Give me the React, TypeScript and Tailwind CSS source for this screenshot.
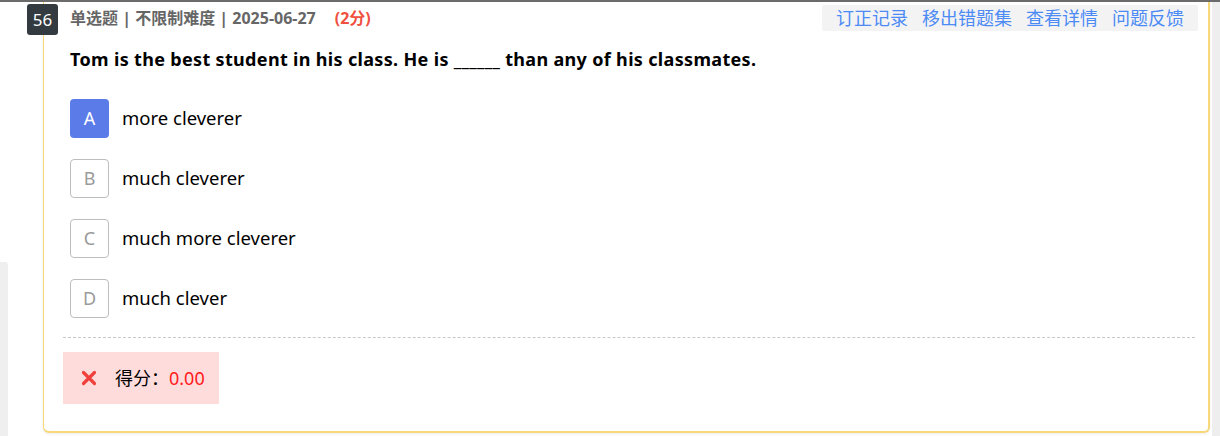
import React from "react";

const font = '"Noto Sans", "Noto Sans CJK SC", sans-serif';

function Option({ letter, text, active }: { letter: string; text: string; active?: boolean }) {
  return (
    <div className="flex items-center h-[38px]">
      {active ? (
        <div className="w-[39px] h-[39px] rounded-[4px] bg-[#5b7be9] text-white flex items-center justify-center text-[18px]">
          {letter}
        </div>
      ) : (
        <div className="w-[39px] h-[39px] rounded-[4px] border border-[#bdbdbd] text-[#9a9a9a] flex items-center justify-center text-[18px]">
          {letter}
        </div>
      )}
      <span className="ml-[13px] text-[18.5px] text-black">{text}</span>
    </div>
  );
}

export default function App() {
  return (
    <div className="relative w-[1220px] h-[436px] bg-white overflow-hidden flex" style={{ fontFamily: font }}>
      <div className="absolute left-0 top-0 w-full h-[2px] bg-[#6b6b6b] z-10" />
      <div className="w-[8px] flex flex-col">
        <div className="h-[262px] bg-white" />
        <div className="flex-1 bg-[#efefef] rounded-tr-[3px]" />
      </div>
      <div className="w-[35px]" />
      <div className="relative w-[1167px] h-[433px] bg-white border-l border-r-2 border-b-2 border-[#f8d878] rounded-b-[6px] shadow-[0_1px_3px_rgba(0,0,0,0.08)] flex flex-col">
        <div className="flex items-center justify-between h-[26px] mt-[5px] pl-[26px] pr-[10px]">
          <div className="flex items-center text-[16px] font-bold text-[#666]">
            <span>单选题 | 不限制难度 | 2025-06-27</span>
            <span className="ml-[19px] text-[#f0503f]">(2分)</span>
          </div>
          <div className="flex items-center h-[26px] bg-[#f3f3f3] rounded-[2px] px-[14px] gap-[14px] text-[18px] text-[#4c8bf5]">
            <span>订正记录</span>
            <span>移出错题集</span>
            <span>查看详情</span>
            <span>问题反馈</span>
          </div>
        </div>
        <div className="pl-[26px] mt-[16px] text-[18px] tracking-[0.33px] font-bold text-black leading-[24px]">
          Tom is the best student in his class. He is ______ than any of his classmates.
        </div>
        <div className="pl-[26px] mt-[28px] flex flex-col gap-[22px]">
          <Option letter="A" text="more cleverer" active />
          <Option letter="B" text="much cleverer" />
          <Option letter="C" text="much more cleverer" />
          <Option letter="D" text="much clever" />
        </div>
        <div className="ml-[19px] mr-[13px] mt-[20px] border-t border-dashed border-[#c8c8c8]" />
        <div className="ml-[19px] mt-[14px] w-[156px] h-[52px] bg-[#ffdcdc] flex items-center pl-[18px] text-[18px]">
          <svg width="16" height="16" viewBox="0 0 16 16">
            <path d="M2.5 2.5 L13.5 13.5 M13.5 2.5 L2.5 13.5" stroke="#f0403c" strokeWidth="3.2" strokeLinecap="round" />
          </svg>
          <span className="ml-[18px] text-black">得分：</span>
          <span className="text-[#ff1a1a]">0.00</span>
        </div>
      </div>
      <div className="w-[2px]" />
      <div className="flex-1 bg-[#eeeeee]" />
      <div className="absolute left-[27px] top-[4px] w-[31px] h-[31px] rounded-[3px] bg-[#343b40] text-white text-[17px] flex items-center justify-center z-20">
        56
      </div>
    </div>
  );
}
